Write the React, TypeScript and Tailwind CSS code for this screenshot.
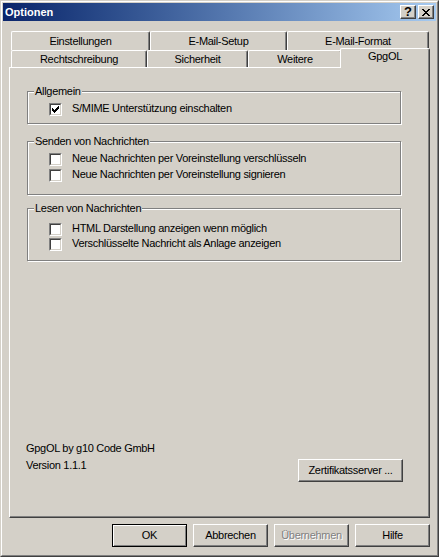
const raised =
  "border border-t-white border-l-white border-r-[#404040] border-b-[#404040] shadow-[inset_-1px_-1px_0_#808080]";

function CloseGlyph() {
  return (
    <svg width="8" height="7" viewBox="0 0 8 7" shapeRendering="crispEdges">
      <path
        fill="#000"
        d="M0 0h2v1H0zM6 0h2v1H6zM1 1h2v1H1zM5 1h2v1H5zM2 2h4v1H2zM3 3h2v1H3zM2 4h4v1H2zM1 5h2v1H1zM5 5h2v1H5zM0 6h2v1H0zM6 6h2v1H6z"
      />
    </svg>
  );
}

function CheckGlyph() {
  return (
    <svg width="7" height="7" viewBox="0 0 7 7" shapeRendering="crispEdges">
      <path
        fill="#000"
        d="M6 0h1v1H6zM5 1h2v1H5zM0 2h1v1H0zM4 2h3v1H4zM0 3h2v1H0zM3 3h3v1H3zM0 4h5v1H0zM1 5h3v1H1zM2 6h1v1H2z"
      />
    </svg>
  );
}

function TitleBar() {
  return (
    <div className="flex h-[18px] items-center bg-linear-to-r from-[#0a246a] to-[#a6caf0] pl-[2px] pr-[2px]">
      <span className="font-bold tracking-normal text-white">Optionen</span>
      <div className="ml-auto flex gap-[2px]">
        <div className={`flex h-[14px] w-[16px] items-center justify-center bg-[#d4d0c8] ${raised}`}>
          <span className="text-[13px] leading-[12px] font-bold tracking-normal">?</span>
        </div>
        <div className={`flex h-[14px] w-[16px] items-center justify-center bg-[#d4d0c8] ${raised}`}>
          <CloseGlyph />
        </div>
      </div>
    </div>
  );
}

const tabEdge =
  "rounded-t-[2px] border-t border-l border-r border-t-white border-l-white border-r-[#404040] shadow-[inset_-1px_0_0_#808080] text-center";

function Tabs() {
  return (
    <div>
      <div className="flex h-[19px] pl-[2px]">
        <div className={`h-[19px] w-[139px] pt-[3px] ${tabEdge}`}>Einstellungen</div>
        <div className={`h-[19px] w-[137px] pt-[3px] ${tabEdge}`}>E-Mail-Setup</div>
        <div className={`h-[19px] w-[142px] pt-[3px] ${tabEdge}`}>E-Mail-Format</div>
      </div>
      <div className="flex h-[17px] items-start pl-[2px]">
        <div className={`h-[17px] w-[136px] bg-[#d4d0c8] pt-[2px] ${tabEdge}`}>Rechtschreibung</div>
        <div className={`h-[17px] w-[101px] bg-[#d4d0c8] pt-[2px] ${tabEdge}`}>Sicherheit</div>
        <div className={`h-[17px] w-[94px] bg-[#d4d0c8] pt-[2px] ${tabEdge}`}>Weitere</div>
        <div className={`relative z-10 -mx-[2px] -mt-[2px] h-[20px] w-[90px] bg-[#d4d0c8] pt-[1px] ${tabEdge}`}>
          GpgOL
        </div>
      </div>
    </div>
  );
}

function CheckBox({ checked }: { checked?: boolean }) {
  return (
    <div className="h-[13px] w-[13px] shrink-0 border border-t-[#808080] border-l-[#808080] border-r-white border-b-white">
      <div className="flex h-full w-full items-center justify-center border border-t-[#404040] border-l-[#404040] border-r-[#d4d0c8] border-b-[#d4d0c8] bg-white">
        {checked && <CheckGlyph />}
      </div>
    </div>
  );
}

function CheckRow({
  label,
  checked,
  className = "",
}: {
  label: string;
  checked?: boolean;
  className?: string;
}) {
  return (
    <div className={`ml-[21px] flex h-[13px] items-start ${className}`}>
      <CheckBox checked={checked} />
      <span className="ml-[10px] leading-[11px] whitespace-nowrap">{label}</span>
    </div>
  );
}

function GroupBox({
  title,
  className,
  children,
}: {
  title: string;
  className: string;
  children: React.ReactNode;
}) {
  return (
    <div
      className={`ml-[17px] w-[374px] border border-[#808080] shadow-[inset_1px_1px_0_#fff,1px_1px_0_#fff] ${className}`}
    >
      <div className="-mt-[7px] ml-[6px] w-fit bg-[#d4d0c8] px-px">{title}</div>
      {children}
    </div>
  );
}

function Button({
  label,
  width = "w-[75px]",
  isDefault,
  disabled,
}: {
  label: string;
  width?: string;
  isDefault?: boolean;
  disabled?: boolean;
}) {
  const frame = isDefault
    ? "border border-black shadow-[inset_1px_1px_0_#fff,inset_-1px_-1px_0_#808080]"
    : raised;
  return (
    <div className={`flex h-[23px] shrink-0 items-center justify-center bg-[#d4d0c8] ${width} ${frame}`}>
      <span className={disabled ? "text-[#808080] [text-shadow:1px_1px_0_#fff]" : ""}>{label}</span>
    </div>
  );
}

function Panel() {
  return (
    <div className="flex h-[451px] flex-col border border-t-white border-l-white border-r-[#404040] border-b-[#404040] shadow-[inset_-1px_-1px_0_#808080]">
      <GroupBox title="Allgemein" className="mt-[23px] h-[33px]">
        <CheckRow label="S/MIME Unterstützung einschalten" checked className="mt-[5px]" />
      </GroupBox>
      <GroupBox title="Senden von Nachrichten" className="mt-[17px] h-[54px]">
        <CheckRow label="Neue Nachrichten per Voreinstellung verschlüsseln" className="mt-[5px]" />
        <CheckRow label="Neue Nachrichten per Voreinstellung signieren" className="mt-[3px]" />
      </GroupBox>
      <GroupBox title="Lesen von Nachrichten" className="mt-[13px] h-[53px]">
        <CheckRow label="HTML Darstellung anzeigen wenn möglich" className="mt-[8px]" />
        <CheckRow label="Verschlüsselte Nachricht als Anlage anzeigen" className="mt-[2px]" />
      </GroupBox>
      <div className="mt-[181px] flex items-start">
        <div className="ml-[16px]">
          <div>GpgOL by g10 Code GmbH</div>
          <div className="mt-[4px]">Version 1.1.1</div>
        </div>
        <div className="mt-[17px] mr-[26px] ml-auto">
          <Button label="Zertifikatsserver ..." width="w-[105px]" />
        </div>
      </div>
    </div>
  );
}

export default function App() {
  return (
    <div className="h-[557px] w-[439px] border border-t-[#d4d0c8] border-l-[#d4d0c8] border-r-[#404040] border-b-[#404040] bg-[#d4d0c8] font-['Liberation_Sans',Arial,sans-serif] text-[11px] leading-[13px] tracking-[-0.3px] text-black">
      <div className="flex h-full flex-col border border-t-white border-l-white border-r-[#808080] border-b-[#808080] p-px">
        <TitleBar />
        <div className="px-[6px] pt-[10px]">
          <Tabs />
          <Panel />
        </div>
        <div className="mt-[6px] flex justify-end gap-[6px] pr-[6px]">
          <Button label="OK" isDefault />
          <Button label="Abbrechen" />
          <Button label="Übernehmen" disabled />
          <Button label="Hilfe" />
        </div>
      </div>
    </div>
  );
}
